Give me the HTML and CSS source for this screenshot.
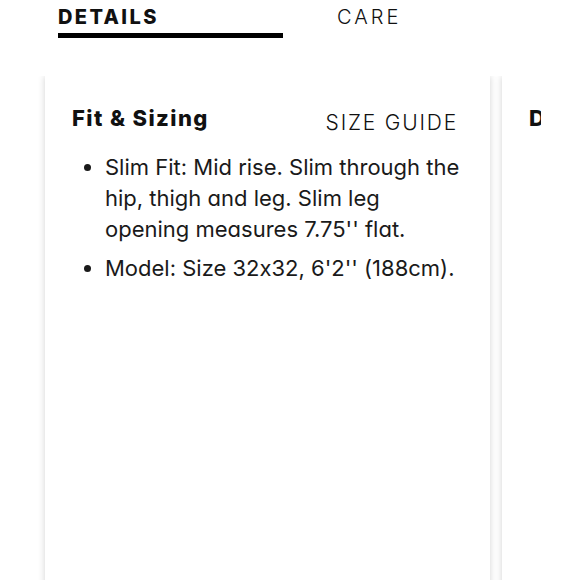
FILE: index.html
```html
<!DOCTYPE html>
<html>
<head>
<meta charset="utf-8">
<link rel="stylesheet" href="styles.css">
</head>
<body>
<nav class="tabs">
  <div class="tab tab-active">DETAILS</div>
  <div class="tab">CARE</div>
</nav>
<div class="carousel">
  <div class="track">
    <section class="card">
      <div class="card-head">
        <h3 class="card-title">Fit &amp; Sizing</h3>
        <a class="card-link">SIZE GUIDE</a>
      </div>
      <ul class="bullets">
        <li>Slim Fit: Mid rise. Slim through the hip, thigh and leg. Slim leg opening measures 7.75'' flat.</li>
        <li>Model: Size 32x32, 6'2'' (188cm).</li>
      </ul>
    </section>
    <section class="card">
      <div class="card-head">
        <h3 class="card-title">Details</h3>
      </div>
    </section>
  </div>
</div>
</body>
</html>
```
FILE: styles.css
```css
html, body {
  margin: 0;
  padding: 0;
  background: #fff;
}
body {
  font-family: Inter, "Liberation Sans", sans-serif;
  font-feature-settings: "cv11" 1, "calt" 0;
  color: #111;
  width: 580px;
  height: 580px;
  overflow: hidden;
}
.tabs {
  display: flex;
  gap: 54px;
  padding-left: 58px;
  padding-top: 4px;
}
.tab {
  width: 225px;
  font-size: 20px;
  line-height: 26px;
  letter-spacing: 3px;
  font-weight: 300;
  padding-bottom: 3px;
  border-bottom: 5px solid transparent;
}
.tab + .tab {
  width: auto;
}
.tab-active {
  font-weight: 800;
  letter-spacing: 2.4px;
  border-bottom-color: #000;
}
.carousel {
  margin-top: 38px;
  width: 541px;
  overflow: hidden;
}
.track {
  display: flex;
  gap: 12px;
  padding: 0 0 0 45px;
}
.card {
  flex: 0 0 445px;
  height: 520px;
  background: #fff;
  box-shadow: 0 0 7px rgba(0, 0, 0, 0.18);
  box-sizing: border-box;
  padding: 28px 30px 0 27px;
}
.card-head {
  display: flex;
  justify-content: space-between;
  align-items: baseline;
}
.card-title {
  margin: 0;
  font-size: 22px;
  font-weight: 800;
  letter-spacing: 1.4px;
  line-height: 28px;
}
.card-link {
  font-size: 21px;
  font-weight: 300;
  letter-spacing: 1.8px;
  position: relative;
  top: 4px;
  margin-right: 2px;
}
.bullets {
  margin: 20px 0 0 0;
  padding-left: 33px;
  font-size: 22px;
  line-height: 31px;
  font-weight: 400;
  color: #1a1a1a;
}
.bullets li + li {
  margin-top: 8px;
}
```
